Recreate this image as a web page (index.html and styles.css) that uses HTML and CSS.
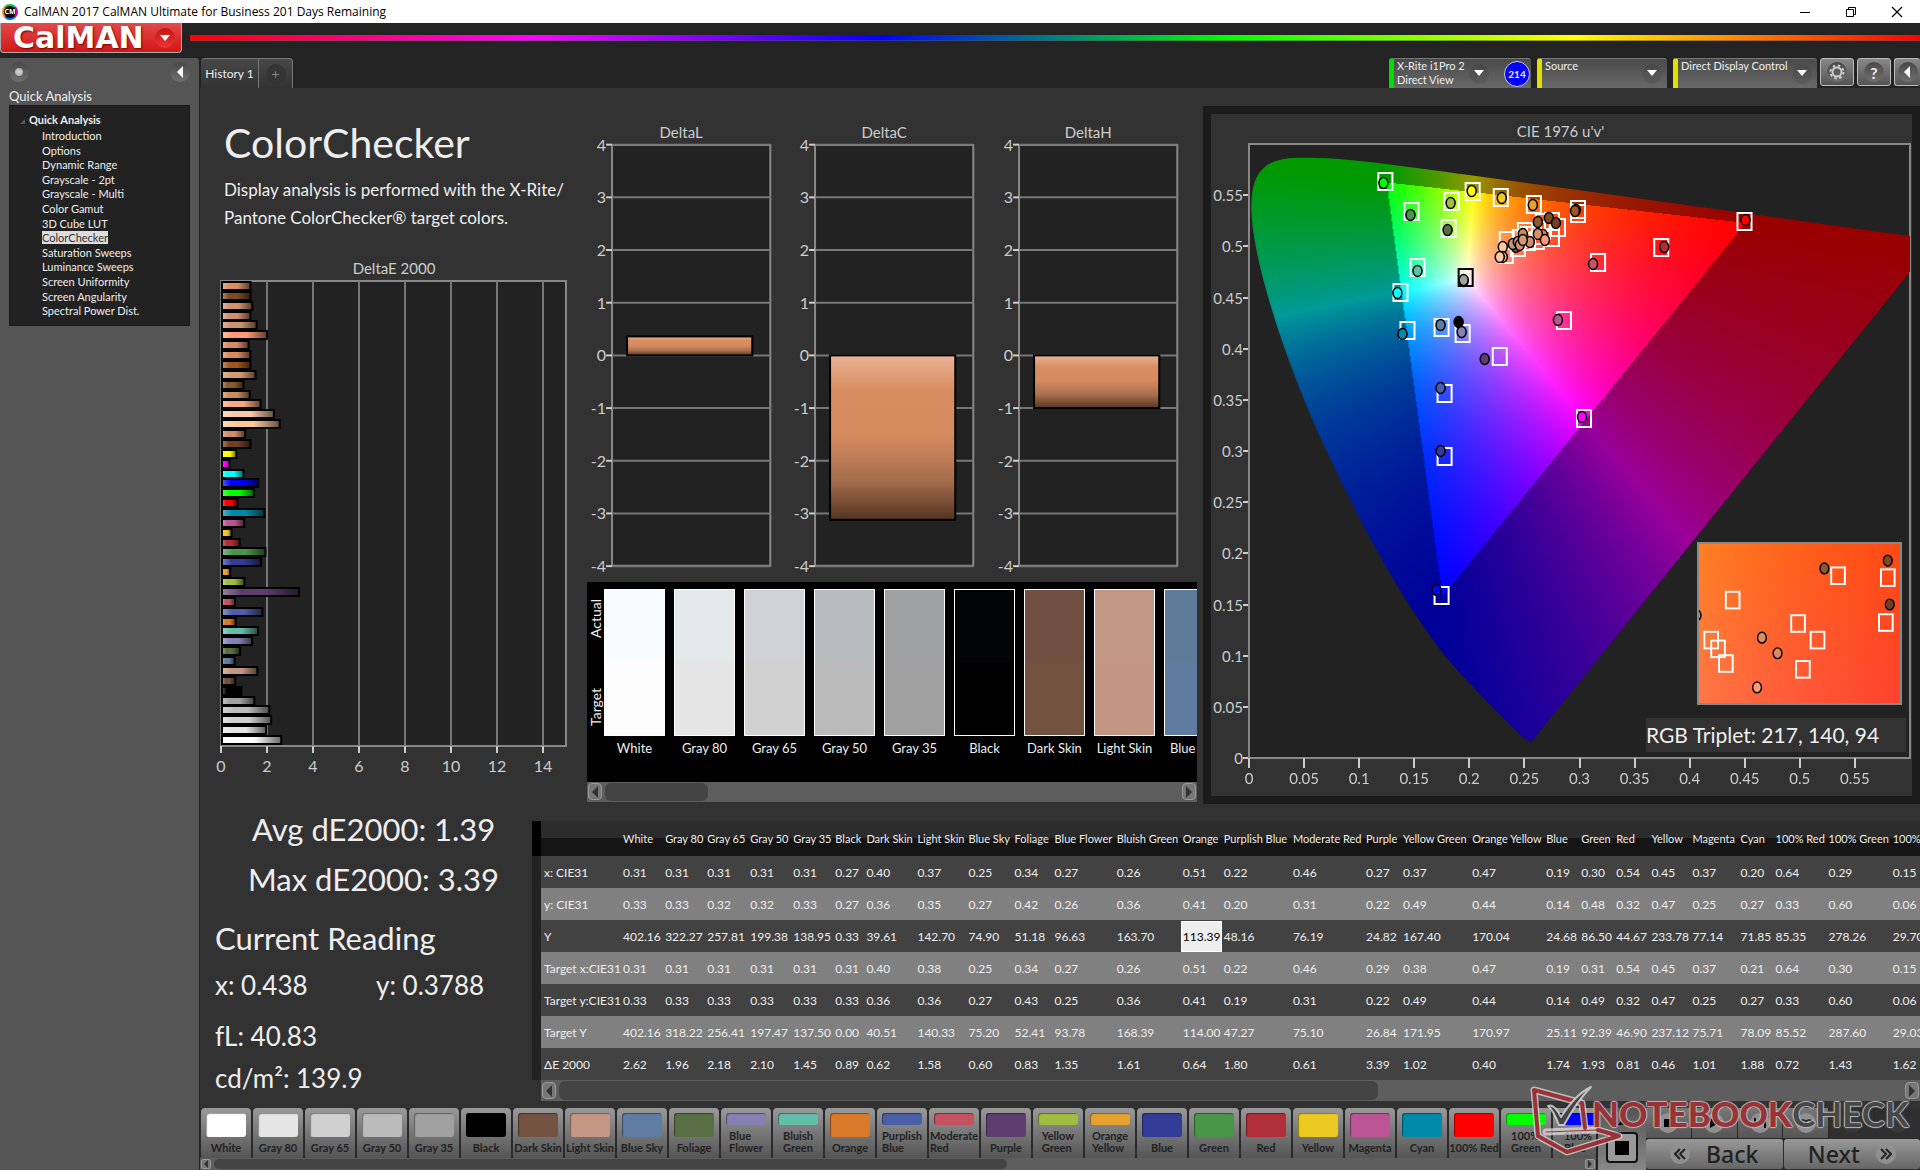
FILE: index.html
```html
<!DOCTYPE html>
<html lang="en">
<head>
    <meta charset="UTF-8">
    <meta name="viewport" content="width=device-width, initial-scale=1.0">
    <title>CalMAN 2017 CalMAN Ultimate for Business</title>
    <link rel="stylesheet" href="styles.css">
</head>
<body>
    <div class="titlebar">
        <span class="app-icon">CM</span>
        <span class="app-title">CalMAN 2017 CalMAN Ultimate for Business 201 Days Remaining</span>
        <button class="win-btn" aria-label="Minimize"><svg width="12" height="12"><path d="M1 6.5h10" stroke="#000"/></svg></button>
        <button class="win-btn" aria-label="Restore"><svg width="12" height="12" fill="none" stroke="#000"><path d="M1.500 3.500h7v7h-7zM3.500 3.500v-2h7v7h-2"/></svg></button>
        <button class="win-btn" aria-label="Close"><svg width="12" height="12"><path d="M1 1l10 10M11 1L1 11" stroke="#000" stroke-width="1.200"/></svg></button>
    </div>

    <header class="brand-row">
        <button class="brand"><span>CalMAN</span><i class="round red"><svg width="12" height="8"><path d="M1 1h10L6 7z" fill="#fff"/></svg></i></button>
        <div class="rainbow"></div>
    </header>

    <div class="app">
        <aside class="sidebar">
            <div class="side-top">
                <button class="round" aria-label="Pin"><i class="pin"></i></button>
                <button class="round" aria-label="Collapse"><svg width="7" height="12"><path d="M6 0v12L0 6z" fill="#fff"/></svg></button>
            </div>
            <h2>Quick Analysis</h2>
            <nav class="tree">
                <strong><svg width="5" height="5"><path d="M5 0v5H0z" fill="#555"/></svg>Quick Analysis</strong>
                <ul>
                    <li><a href="#">Introduction</a></li>
                    <li><a href="#">Options</a></li>
                    <li><a href="#">Dynamic Range</a></li>
                    <li><a href="#">Grayscale - 2pt</a></li>
                    <li><a href="#">Grayscale - Multi</a></li>
                    <li><a href="#">Color Gamut</a></li>
                    <li><a href="#">3D Cube LUT</a></li>
                    <li><a href="#" class="current">ColorChecker</a></li>
                    <li><a href="#">Saturation Sweeps</a></li>
                    <li><a href="#">Luminance Sweeps</a></li>
                    <li><a href="#">Screen Uniformity</a></li>
                    <li><a href="#">Screen Angularity</a></li>
                    <li><a href="#">Spectral Power Dist.</a></li>
                </ul>
            </nav>
        </aside>

        <div class="main">
            <div class="tabs">
                <button class="tab">History 1</button>
                <button class="tab add" aria-label="Add tab"><i class="round dim">+</i></button>
                <div class="devices">
                    <div class="device green meter">
                        <button class="device-name">X-Rite i1Pro 2<br>Direct View</button>
                        <i class="round"><svg width="10" height="7"><path d="M0 0h10L5 6z" fill="#fff"/></svg></i>
                        <span class="badge">214</span>
                    </div>
                    <div class="device source">
                        <button class="device-name">Source</button>
                        <i class="round"><svg width="10" height="7"><path d="M0 0h10L5 6z" fill="#fff"/></svg></i>
                    </div>
                    <div class="device display">
                        <button class="device-name">Direct Display Control</button>
                        <i class="round"><svg width="10" height="7"><path d="M0 0h10L5 6z" fill="#fff"/></svg></i>
                    </div>
                    <button class="tool" aria-label="Settings"><i class="round"><svg width="16" height="16" fill="none" stroke="#ccc"><circle cx="8" cy="8" r="4.500" stroke-width="2"/><circle cx="8" cy="8" r="6.500" stroke-width="2" stroke-dasharray="2.500 2.600"/></svg></i></button>
                    <button class="tool" aria-label="Help"><i class="round">?</i></button>
                    <button class="tool" aria-label="Back"><i class="round"><svg width="7" height="12"><path d="M6 0v12L0 6z" fill="#fff"/></svg></i></button>
                </div>
            </div>

            <div class="content">
                <div class="top">
                    <section class="intro">
                        <h1>ColorChecker</h1>
                        <p>Display analysis is performed with the X-Rite/<br>Pantone ColorChecker® target colors.</p>
                        <svg id="deltaE" class="chart" viewBox="0 0 385 525"></svg>
                    </section>

                    <section class="middle">
                        <div class="deltas" id="deltas"></div>
                        <div class="compare">
                            <div class="compare-body">
                                <div class="side-labels"><span>Target</span><span>Actual</span></div>
                                <div class="swatches" id="swatches"></div>
                            </div>
                            <div class="scroll"><button aria-label="Scroll left"><svg width="6" height="12"><path d="M6 0v12L0 6z"/></svg></button><div class="track"><div class="thumb compare-thumb"></div></div><button aria-label="Scroll right"><svg width="6" height="12"><path d="M0 0v12l6-6z"/></svg></button></div>
                        </div>
                    </section>

                    <section class="cie">
                        <h3>CIE 1976 u'v'</h3>
                        <div class="cie-plot">
                            <div class="v-axis" id="vAxis"></div>
                            <div class="plot">
                                <canvas id="locus" width="659" height="614"></canvas>
                                <svg id="markers" viewBox="0 0 659 614" preserveAspectRatio="none"></svg>
                                <div class="inset">
                                    <canvas id="insetCanvas" width="205" height="163"></canvas>
                                    <svg id="insetMarkers" viewBox="0 0 205 163"></svg>
                                </div>
                                <div class="triplet">RGB Triplet: 217, 140, 94</div>
                            </div>
                            <div class="u-axis" id="uAxis"></div>
                        </div>
                    </section>
                </div>

                <div class="bottom">
                    <section class="reading">
                        <p class="big avg">Avg dE2000: 1.39</p>
                        <p class="big max">Max dE2000: 3.39</p>
                        <p class="big current-title">Current Reading</p>
                        <p class="val xy"><span>x: 0.438</span><span>y: 0.3788</span></p>
                        <p class="val fl">fL: 40.83</p>
                        <p class="val">cd/m²: 139.9</p>
                    </section>
                    <section class="results">
                        <div class="table-wrap"><table id="results"></table></div>
                        <div class="scroll table-scroll"><button aria-label="Scroll left"><svg width="6" height="12"><path d="M6 0v12L0 6z"/></svg></button><div class="track"><div class="thumb table-thumb"></div></div><button aria-label="Scroll right"><svg width="6" height="12"><path d="M0 0v12l6-6z"/></svg></button></div>
                    </section>
                </div>

                <footer class="footer">
                    <div class="patch-zone">
                        <div class="patches" id="patches"></div>
                        <div class="scroll thin"><button aria-label="Scroll left"><svg width="4" height="8"><path d="M4 0v8L0 4z"/></svg></button><div class="track"><div class="thumb patch-thumb"></div></div><button aria-label="Scroll right"><svg width="4" height="8"><path d="M0 0v8l4-4z"/></svg></button></div>
                    </div>
                    <div class="stop-zone">
                        <button class="up" aria-label="Up"><svg width="8" height="5"><path d="M4 0l4 5H0z"/></svg></button>
                        <button class="stop" aria-label="Stop"><i></i></button>
                    </div>
                    <div class="nav-zone">
                        <div class="transport">
                            <button aria-label="Stop reading"><i><svg width="8" height="8"><path d="M0 0h8v8H0z"/></svg></i></button>
                            <button aria-label="Read"><i><svg width="9" height="10"><path d="M0 0l9 5-9 5z"/></svg></i></button>
                            <button aria-label="Read series"><i><svg width="12" height="10"><path d="M0 0h2v10H0zM10 0h2v10h-2zM4 2l4 3-4 3z"/></svg></i></button>
                            <button aria-label="Continuous"><i><svg width="14" height="8" fill="none" stroke="#222" stroke-width="1.500"><circle cx="4" cy="4" r="3"/><circle cx="10" cy="4" r="3"/></svg></i></button>
                            <button class="off" aria-label="Refresh"><i></i></button>
                            <button class="off" aria-label="More"><i></i></button>
                        </div>
                        <div class="steps">
                            <button><i><svg width="12" height="12"><path d="M6 1L1 6l5 5M11 1L6 6l5 5"/></svg></i>Back</button>
                            <button>Next<i><svg width="12" height="12"><path d="M1 1l5 5-5 5M6 1l5 5-5 5"/></svg></i></button>
                        </div>
                    </div>
                    <div class="watermark">
                        <svg width="110" height="80" viewBox="0 5 110 80" fill="none" stroke-linejoin="round" stroke-linecap="round">
                            <path d="M67 53L64 28 16 15l4 46 29 16 52-16-21-6-52 2" stroke="#ddd" stroke-opacity=".75" stroke-width="7"/>
                            <path d="M67 53L64 28 16 15l4 46 29 16 52-16-21-6" stroke="#9a3338" stroke-width="4"/>
                            <path d="M28 57l52-2" stroke="#9a3338" stroke-width="1"/>
                            <path d="M30 31c4-2 8 1 13 11C52 28 62 17 73 12 62 23 53 37 46 50h-5c-3-8-6-15-11-19z" fill="#444" stroke="#ddd" stroke-opacity=".8" stroke-width="2"/>
                        </svg>
                        <span><b>NOTEBOOK</b>CHECK</span>
                    </div>
                </footer>
            </div>
        </div>
    </div>

    <script>
        const barColors = [
            ["#da8e61", 1.28], ["#7b4a26", 1.28], ["#cf916e", 1.36], ["#cf9070", 1.28], ["#cb9270", 1.55],
            ["#ff9976", 2.0], ["#d58c6d", 1.2], ["#da895f", 1.28], ["#a0571f", 1.28], ["#d39a74", 1.5],
            ["#8b582f", 0.98], ["#c78d5c", 1.25], ["#f8a87c", 1.72], ["#fcc8a8", 2.3], ["#fec898", 2.55],
            ["#d18c6b", 1.05], ["#713f25", 1.28], ["#ffff00", 0.67], ["#ff00ff", 0.37], ["#00ffff", 0.98],
            ["#0000ff", 1.62], ["#00ff00", 1.43], ["#ff0000", 0.72], ["#0089a8", 1.88], ["#bb5595", 1.01],
            ["#ecc920", 0.46], ["#b02f38", 0.81], ["#489648", 1.93], ["#333c96", 1.74], ["#e6a12e", 0.4],
            ["#9fbd40", 1.02], ["#5e3e6e", 3.39], ["#c45261", 0.61], ["#4b5fa8", 1.8], ["#d97a2a", 0.64],
            ["#62bda9", 1.61], ["#8681b3", 1.35], ["#576f42", 0.83], ["#5f7da2", 0.6], ["#c59782", 1.58],
            ["#735242", 0.62], ["#000000", 0.89], ["#a0a0a0", 1.45], ["#bbbbbb", 2.1], ["#d0d0d0", 2.18],
            ["#e5e5e5", 1.96], ["#ffffff", 2.62]
        ];

        // name, column width, x, y, Y, target x, target y, target Y, dE
        const results = [
            ["White", 42, "0.31", "0.33", "402.16", "0.31", "0.33", "402.16", "2.62"],
            ["Gray 80", 42, "0.31", "0.33", "322.27", "0.31", "0.33", "318.22", "1.96"],
            ["Gray 65", 43, "0.31", "0.32", "257.81", "0.31", "0.33", "256.41", "2.18"],
            ["Gray 50", 43, "0.31", "0.32", "199.38", "0.31", "0.33", "197.47", "2.10"],
            ["Gray 35", 42, "0.31", "0.33", "138.95", "0.31", "0.33", "137.50", "1.45"],
            ["Black", 31, "0.27", "0.27", "0.33", "0.31", "0.33", "0.00", "0.89"],
            ["Dark Skin", 51, "0.40", "0.36", "39.61", "0.40", "0.36", "40.51", "0.62"],
            ["Light Skin", 51, "0.37", "0.35", "142.70", "0.38", "0.36", "140.33", "1.58"],
            ["Blue Sky", 46, "0.25", "0.27", "74.90", "0.25", "0.27", "75.20", "0.60"],
            ["Foliage", 40, "0.34", "0.42", "51.18", "0.34", "0.43", "52.41", "0.83"],
            ["Blue Flower", 62, "0.27", "0.26", "96.63", "0.27", "0.25", "93.78", "1.35"],
            ["Bluish Green", 66, "0.26", "0.36", "163.70", "0.26", "0.36", "168.39", "1.61"],
            ["Orange", 41, "0.51", "0.41", "113.39", "0.51", "0.41", "114.00", "0.64"],
            ["Purplish Blue", 69, "0.22", "0.20", "48.16", "0.22", "0.19", "47.27", "1.80"],
            ["Moderate Red", 73, "0.46", "0.31", "76.19", "0.46", "0.31", "75.10", "0.61"],
            ["Purple", 37, "0.27", "0.22", "24.82", "0.29", "0.22", "26.84", "3.39"],
            ["Yellow Green", 69, "0.37", "0.49", "167.40", "0.38", "0.49", "171.95", "1.02"],
            ["Orange Yellow", 74, "0.47", "0.44", "170.04", "0.47", "0.44", "170.97", "0.40"],
            ["Blue", 35, "0.19", "0.14", "24.68", "0.19", "0.14", "25.11", "1.74"],
            ["Green", 35, "0.30", "0.48", "86.50", "0.31", "0.49", "92.39", "1.93"],
            ["Red", 35, "0.54", "0.32", "44.67", "0.54", "0.32", "46.90", "0.81"],
            ["Yellow", 41, "0.45", "0.47", "233.78", "0.45", "0.47", "237.12", "0.46"],
            ["Magenta", 48, "0.37", "0.25", "77.14", "0.37", "0.25", "75.71", "1.01"],
            ["Cyan", 35, "0.20", "0.27", "71.85", "0.21", "0.27", "78.09", "1.88"],
            ["100% Red", 53, "0.64", "0.33", "85.35", "0.64", "0.33", "85.52", "0.72"],
            ["100% Green", 64, "0.29", "0.60", "278.26", "0.30", "0.60", "287.60", "1.43"],
            ["100% Blue", 60, "0.15", "0.06", "29.70", "0.15", "0.06", "29.03", "1.62"]
        ];
        const rowNames = ["x: CIE31", "y: CIE31", "Y", "Target x:CIE31", "Target y:CIE31", "Target Y", "ΔE 2000"];

        const patchColors = ["#fff", "#e5e5e5", "#d0d0d0", "#bbb", "#a0a0a0", "#000", "#735242", "#c59782", "#5f7da2",
            "#576f42", "#8681b3", "#62bda9", "#d97a2a", "#4b5fa8", "#c45261", "#5e3e6e", "#9fbd40", "#e6a12e",
            "#333c96", "#489648", "#b02f38", "#ecc920", "#bb5595", "#0089a8", "#f00", "#0f0", "#00f"];

        const pairs = [
            ["White", "#f7fdff", "#fcfcfc"], ["Gray 80", "#e3e8eb", "#e5e5e5"], ["Gray 65", "#cfd3d8", "#d1d1d1"],
            ["Gray 50", "#b7bcbe", "#bababa"], ["Gray 35", "#9fa0a1", "#a0a0a0"], ["Black", "#020305", "#000"],
            ["Dark Skin", "#715041", "#735242"], ["Light Skin", "#c29885", "#c49681"], ["Blue Sky", "#5e7b9a", "#5f7ba0"]
        ];

        function byId(id) { return document.getElementById(id); }

        // DeltaE 2000 bars
        function drawDeltaE() {
            let s = '<defs><linearGradient id="shade"><stop offset="0" stop-color="#fff" stop-opacity=".35"/><stop offset=".25" stop-color="#fff" stop-opacity="0"/><stop offset=".55" stop-opacity="0"/><stop offset="1" stop-opacity=".6"/></linearGradient></defs>';
            s += '<text class="title" x="194" y="19">DeltaE 2000</text>';
            s += '<rect class="frame" x="21" y="26" width="345" height="465"/>';
            for (let i = 0; i <= 14; i += 2) {
                const x = 21 + i * 23;
                s += `<path class="grid" d="M${x} 26v465"/><path class="tick" d="M${x} 491v7"/><text class="tick-label" x="${x}" y="517">${i}</text>`;
            }
            barColors.forEach(([color, value], i) => {
                const y = Math.round(27 + i * 9.87);
                const w = value * 23 - 1;
                s += `<rect x="22" y="${y}" width="${w}" height="8" fill="${color}"/><rect x="22" y="${y}" width="${w}" height="8" fill="url(#shade)" stroke="#000" stroke-width="2"/>`;
            });
            byId("deltaE").innerHTML = s;
        }

        // DeltaL, DeltaC and DeltaH share one scale, -4 to 4
        function drawDelta(name, value) {
            const zero = 245, unit = 52.6;
            let s = '<defs><linearGradient id="skin" x2="0" y2="1"><stop offset="0" stop-color="#e9b496"/><stop offset=".22" stop-color="#d98d5f"/><stop offset=".48" stop-color="#d58b60"/><stop offset=".75" stop-color="#a86f4e"/><stop offset="1" stop-color="#553522"/></linearGradient></defs>';
            s += `<text class="title" x="94" y="28">${name}</text><rect class="frame" x="25" y="35" width="158" height="420"/>`;
            for (let i = -4; i <= 4; i++) {
                const y = zero - i * unit;
                s += `<path class="grid" d="M25 ${y}h158"/><path class="tick" d="M19 ${y}h6"/><text class="tick-label end" x="19" y="${y + 6}">${i}</text>`;
            }
            const top = value > 0 ? zero - value * unit : zero;
            s += `<rect x="40" y="${top}" width="125" height="${Math.abs(value) * unit}" fill="url(#skin)" stroke="#000" stroke-width="2"/>`;
            return `<svg class="chart" viewBox="0 0 203 465">${s}</svg>`;
        }

        function drawTable() {
            let s = '<thead><tr><th class="gutter"></th><th class="row-name"></th>';
            results.forEach(r => s += `<th scope="col" style="width:${r[1]}px">${r[0]}</th>`);
            s += "</tr></thead><tbody>";
            rowNames.forEach((name, i) => {
                s += `<tr><td class="gutter"></td><th scope="row">${name}</th>`;
                results.forEach(r => {
                    const picked = r[0] === "Orange" && i === 2;
                    s += `<td>${picked ? `<span class="picked">${r[i + 2]}</span>` : r[i + 2]}</td>`;
                });
                s += "</tr>";
            });
            byId("results").innerHTML = s + "</tbody>";
        }

        function drawPatches() {
            const tall = ["Blue Flower", "Bluish Green", "Purplish Blue", "Moderate Red", "Yellow Green", "Orange Yellow", "100% Green", "100% Blue"];
            byId("patches").innerHTML = results.map((r, i) => {
                const two = tall.includes(r[0]);
                const label = two ? r[0].replace(" ", "<br>") : r[0];
                return `<button class="patch${two ? " two" : ""}"><i style="background:${patchColors[i]}"></i><span>${label}</span></button>`;
            }).join("");
            byId("swatches").innerHTML = pairs.map(p =>
                `<div class="pair"><div class="pair-box"><i style="background:${p[1]}"></i><i style="background:${p[2]}"></i></div><span>${p[0]}</span></div>`
            ).join("");
        }

        function drawAxes() {
            let v = "", u = "";
            for (let i = 11; i >= 0; i--) v += `<span style="bottom:${i / 12 * 100}%">${i * 5 / 100}</span>`;
            for (let i = 0; i <= 11; i++) u += `<span style="left:${i / 12 * 100}%">${i * 5 / 100}</span>`;
            byId("vAxis").innerHTML = v;
            byId("uAxis").innerHTML = u;
        }

        // Spectral locus, CIE 1931 xy
        const locus = [
            [.1741, .0050], [.1733, .0048], [.1714, .0051], [.1689, .0069], [.1644, .0109], [.1566, .0177], [.1440, .0297],
            [.1355, .0399], [.1241, .0578], [.1096, .0868], [.0913, .1327], [.0687, .2007], [.0454, .2950], [.0235, .4127],
            [.0082, .5384], [.0039, .6548], [.0139, .7502], [.0389, .8120], [.0743, .8338], [.1142, .8262], [.1547, .8059],
            [.1929, .7816], [.2296, .7543], [.3016, .6923], [.3731, .6245], [.4441, .5547], [.5125, .4866], [.5752, .4242],
            [.6270, .3725], [.6658, .3340], [.6915, .3083], [.7190, .2809], [.7347, .2653]
        ];

        function colorAt(u, v) {
            const d = 6 * u - 16 * v + 12;
            const x = 9 * u / d, y = 4 * v / d;
            const X = x / y, Z = (1 - x - y) / y;
            const rgb = [
                3.2406 * X - 1.5372 - 0.4986 * Z,
                -0.9689 * X + 1.8758 + 0.0415 * Z,
                0.0557 * X - 0.2040 + 1.0570 * Z
            ];
            const dim = Math.min(...rgb) < 0 ? 153 : 255;
            const max = Math.max(...rgb);
            return rgb.map(c => Math.max(0, c) / max * dim);
        }

        function fillField(canvas, u0, u1, v0, v1) {
            const ctx = canvas.getContext("2d");
            const w = canvas.width, h = canvas.height;
            const img = ctx.createImageData(w, h);
            for (let y = 0; y < h; y++) {
                for (let x = 0; x < w; x++) {
                    const c = colorAt(u0 + (u1 - u0) * (x + 0.5) / w, v0 + (v1 - v0) * (y + 0.5) / h);
                    const k = (y * w + x) * 4;
                    img.data[k] = c[0];
                    img.data[k + 1] = c[1];
                    img.data[k + 2] = c[2];
                    img.data[k + 3] = 255;
                }
            }
            ctx.putImageData(img, 0, 0);
        }

        function drawLocus() {
            const canvas = byId("locus");
            fillField(canvas, 0, 0.6, 0.6, 0);
            const ctx = canvas.getContext("2d");
            // keep only what is inside the horseshoe
            const pts = locus.map(([x, y]) => {
                const d = -2 * x + 12 * y + 3;
                return [4 * x / d / 0.6 * 659, 614 - 9 * y / d / 0.6 * 614];
            });
            ctx.globalCompositeOperation = "destination-in";
            ctx.beginPath();
            ctx.moveTo(pts[0][0], pts[0][1]);
            for (let i = 1; i < pts.length - 1; i++) {
                const mx = (pts[i][0] + pts[i + 1][0]) / 2;
                const my = (pts[i][1] + pts[i + 1][1]) / 2;
                ctx.quadraticCurveTo(pts[i][0], pts[i][1], mx, my);
            }
            ctx.lineTo(pts[pts.length - 1][0], pts[pts.length - 1][1]);
            ctx.closePath();
            ctx.fill();
        }

        const targets = [[136, 37], [162, 67], [202, 57], [199, 84], [223, 47], [251, 53], [284, 60], [328, 65], [328, 69],
            [494, 77], [411, 103], [348, 118], [168, 123], [151, 148], [158, 186], [192, 183], [213, 189], [250, 212],
            [195, 249], [195, 312], [192, 451], [314, 176], [334, 274], [257, 96], [256, 110], [268, 103], [275, 87],
            [270, 94], [278, 97], [287, 96], [293, 86], [293, 78], [302, 77], [308, 83], [302, 93], [278, 91], [284, 91]];
        const measured = [[134, 39, "#0f0"], [161, 71, "#489648"], [201, 59, "#9fbd40"], [198, 86, "#576f42"],
            [222, 47, "#ff0"], [252, 54, "#ecc920"], [283, 61, "#e6a12e"], [326, 66, "#d97a2a"], [325, 67, "#a0571f"],
            [495, 76, "#f00"], [414, 103, "#b02f38"], [343, 120, "#c45261"], [168, 127, "#62bda9"], [148, 149, "#0ff"],
            [153, 190, "#0089a8"], [191, 181, "#5f7da2"], [209, 178, "#000"], [212, 188, "#8681b3"], [235, 215, "#5e3e6e"],
            [191, 244, "#4b5fa8"], [191, 307, "#333c96"], [187, 446, "#00f"], [308, 176, "#bb5595"], [332, 273, "#f0f"],
            [214, 137, "#bbb"], [214, 136, "#a0a0a0"], [299, 74, "#7b4a26"], [288, 78, "#8b582f"], [306, 79, "#713f25"],
            [293, 91, "#da895f"], [288, 90, "#da8e61"], [295, 96, "#ff9976"], [266, 103, "#735242"], [263, 100, "#c59782"],
            [268, 98, "#cf916e"], [270, 101, "#cf9070"], [273, 90, "#c78d5c"], [280, 98, "#d18c6b"], [273, 96, "#d39a74"],
            [253, 103, "#fec898"], [253, 113, "#f8a87c"], [250, 113, "#fcc8a8"]];
        const insetTargets = [[142, 32], [193, 34], [34, 57], [101, 81], [12, 98], [19, 107], [27, 122], [121, 98], [191, 80], [106, 128]];
        const insetMeasured = [[128, 25, "#8b582f"], [193, 17, "#7b4a26"], [195, 62, "#713f25"], [64, 96, "#da8e61"],
            [80, 112, "#da895f"], [59, 147, "#ff9976"], [-3, 73, "#c78d5c"]];

        function box(x, y, color) {
            return `<rect class="target" x="${x - 7}" y="${y - 8}" width="14" height="17" stroke="${color}"/>`;
        }
        function dot(x, y, color) {
            return `<ellipse class="dot" cx="${x}" cy="${y}" rx="4.500" ry="5.500" fill="${color}"/>`;
        }

        drawDeltaE();
        byId("deltas").innerHTML = drawDelta("DeltaL", 0.36) + drawDelta("DeltaC", -3.12) + drawDelta("DeltaH", -1);
        drawTable();
        drawPatches();
        drawAxes();
        drawLocus();
        fillField(byId("insetCanvas"), 0.248, 0.291, 0.525, 0.502);
        byId("markers").innerHTML = targets.map(t => box(t[0], t[1], "#fff")).join("") + box(216, 133, "#000") +
            measured.map(m => dot(...m)).join("");
        byId("insetMarkers").innerHTML = insetTargets.map(t => box(t[0], t[1], "#fff")).join("") +
            insetMeasured.map(m => dot(...m)).join("");
    </script>
</body>
</html>
```
FILE: styles.css
```css
* {
    box-sizing: border-box;
}
body {
    margin: 0;
    height: 100vh;
    display: flex;
    flex-direction: column;
    background: #232323;
    color: #eee;
    font-family: Lato, sans-serif;
    font-size: 12px;
    overflow: hidden;
}
h1, h2, h3, p, ul {
    margin: 0;
    padding: 0;
    font-weight: normal;
}
button {
    font: inherit;
    color: inherit;
    border: none;
    background: none;
    padding: 0;
}
i {
    font-style: normal;
}
a {
    color: inherit;
    text-decoration: none;
}

/* Window title */
.titlebar {
    display: flex;
    align-items: center;
    height: 23px;
    background: #fff;
    color: #000;
    font-family: "Open Sans", sans-serif;
}
.app-icon {
    width: 16px;
    height: 16px;
    margin: 0 6px 0 2px;
    border-radius: 50%;
    border: 2px solid #0a8;
    border-color: #0c4 #c0c #06f #e80;
    background: #000;
    color: #fff;
    font-size: 7px;
    font-weight: bold;
    line-height: 12px;
    text-align: center;
}
.app-title {
    flex: 1;
}
.win-btn {
    width: 46px;
    height: 22px;
}
.win-btn svg {
    display: block;
    margin: auto;
}

/* Brand */
.brand-row {
    display: flex;
    height: 35px;
    align-items: flex-start;
    gap: 8px;
}
.brand {
    display: flex;
    align-items: center;
    justify-content: space-between;
    width: 182px;
    height: 30px;
    padding: 0 6px 0 12px;
    border: 1px solid #aaa;
    border-top: none;
    border-radius: 0 0 4px 4px;
    background: linear-gradient(#e34a4a, #d01818);
    color: #fff;
    font-family: "DejaVu Sans", sans-serif;
    font-size: 30px;
    font-weight: bold;
    line-height: 28px;
    text-shadow: 1px 1px 2px #700;
}
.rainbow {
    flex: 1;
    height: 6px;
    margin-top: 12px;
    background: linear-gradient(to right, #f00, #f0f, #00f, #0f0, #ff0, #f00);
    border-bottom: 1px solid #5558;
}
.round {
    display: flex;
    align-items: center;
    justify-content: center;
    flex: none;
    width: 20px;
    height: 20px;
    border-radius: 50%;
    background: linear-gradient(#484848, #707070);
}
.round.red {
    background: linear-gradient(#c41616, #e33);
}
.round.dim {
    background: #353535;
    color: #888;
    font-size: 14px;
}

.app {
    flex: 1;
    display: flex;
    min-height: 0;
}

/* Sidebar */
.sidebar {
    width: 200px;
    padding: 4px 9px;
    background: #555;
    border-radius: 0 4px 0 0;
    border-right: 1px solid #222;
}
.side-top {
    display: flex;
    justify-content: space-between;
}
.pin {
    width: 8px;
    height: 8px;
    border-radius: 50%;
    background: radial-gradient(#ddd, #999);
}
.sidebar h2 {
    margin-top: 5px;
    font-size: 13px;
    line-height: 18px;
}
.tree {
    height: 221px;
    padding: 7px 0 0 10px;
    background: #222;
    border: 1px solid #1a1a1a;
    font-size: 11px;
    line-height: 14px;
}
.tree strong svg {
    margin-right: 4px;
}
.tree ul {
    display: flex;
    flex-direction: column;
    height: 190px;
    margin-top: 2px;
    padding-left: 22px;
    list-style: none;
}
.tree li {
    flex: 1;
}
.tree .current {
    background: #ddd;
    color: #333;
}

.main {
    flex: 1;
    display: flex;
    flex-direction: column;
    min-width: 0;
}
.tabs {
    display: flex;
    height: 30px;
    padding-left: 1px;
}
.tab {
    width: 58px;
    background: linear-gradient(#484848, #333);
    border: 1px solid #777;
    border-bottom: none;
    border-left: none;
    border-radius: 4px 0 0 0;
}
.tab.add {
    display: flex;
    align-items: center;
    justify-content: center;
    width: 34px;
    border-radius: 0 4px 0 0;
}
.devices {
    display: flex;
    margin-left: auto;
    gap: 3px;
}
.device {
    display: flex;
    align-items: center;
    margin-right: 3px;
    padding-right: 5px;
    background: linear-gradient(#4a4a4a, #686868);
    border-left: 5px solid #e0e000;
    border-top: 1px solid #777;
    border-radius: 3px 3px 0 0;
    font-size: 11px;
}
.device.green {
    border-left-color: #0d0;
}
.device-name {
    flex: 1;
    align-self: stretch;
    display: flex;
    padding: 0 3px;
    text-align: left;
    line-height: 14px;
    white-space: nowrap;
}
.meter {
    width: 142px;
    padding-right: 1px;
}
.source {
    width: 130px;
}
.display {
    width: 144px;
    margin-right: 0;
}
.device .round {
    background: linear-gradient(#484848, #5c5c5c);
}
.badge {
    width: 26px;
    height: 26px;
    margin-left: 15px;
    border: 1px solid #ccc;
    border-radius: 50%;
    background: #00f;
    font-size: 10px;
    font-weight: bold;
    line-height: 24px;
    text-align: center;
}
.tool {
    display: flex;
    align-items: center;
    justify-content: center;
    width: 34px;
    height: 28px;
    border: 1px solid #bbb;
    border-radius: 3px;
    background: linear-gradient(#888, #555);
    font-size: 16px;
    font-weight: bold;
}
.tool:last-child {
    width: 26px;
    border-right: none;
}

/* Content */
.content {
    flex: 1;
    display: flex;
    flex-direction: column;
    min-height: 0;
    background: #323232;
}
.top {
    display: grid;
    grid-template-columns: 385fr 618fr 717fr;
    height: 716px;
}
.top section {
    min-width: 0;
}
.intro h1 {
    padding: 25px 0 0 24px;
    font-size: 41px;
    line-height: 60px;
}
.intro p {
    padding: 3px 0 0 24px;
    font-size: 17px;
    line-height: 28px;
    white-space: nowrap;
}
.intro .chart {
    margin-top: 23px;
}
.chart {
    display: block;
    width: 100%;
}
.chart text {
    fill: #ccc;
    font-size: 16px;
    text-anchor: middle;
}
.chart text.title {
    font-size: 15px;
}
.chart text.end {
    text-anchor: end;
}
.frame {
    fill: #222;
    stroke: #888;
    stroke-width: 2;
}
.grid {
    stroke: #777;
    stroke-width: 2;
}
.tick {
    stroke: #ccc;
    stroke-width: 2;
}
.middle {
    padding: 22px 6px 0 2px;
}
.deltas {
    display: grid;
    grid-template-columns: repeat(3, 1fr);
}
.compare {
    margin-top: 6px;
    background: #000;
}
.compare-body {
    display: flex;
    height: 200px;
    padding-top: 7px;
}
.side-labels {
    display: flex;
    justify-content: space-between;
    width: 17px;
    height: 147px;
    padding: 10px 0;
    writing-mode: vertical-rl;
    transform: rotate(180deg);
    font-size: 14px;
    line-height: 17px;
}
.swatches {
    flex: 1;
    display: flex;
    gap: 9px;
    overflow: hidden;
}
.pair {
    flex: none;
    width: 61px;
    text-align: center;
    font-size: 13px;
    line-height: 24px;
    white-space: nowrap;
}
.pair-box {
    display: flex;
    flex-direction: column;
    height: 147px;
    border: 1px solid #fff;
}
.pair-box i {
    flex: 1;
}

/* Scroll bars */
.scroll {
    display: flex;
    align-items: center;
    height: 20px;
    padding: 1px;
    background: #5e5e5e;
}
.scroll button {
    display: flex;
    align-items: center;
    justify-content: center;
    width: 14px;
    height: 17px;
    border: 1px solid #999;
    border-radius: 4px;
    background: #777;
}
.scroll path {
    fill: #333;
}
.track {
    flex: 1;
    height: 100%;
    padding: 0 3px;
}
.thumb {
    height: 100%;
    border-radius: 6px;
    background: #444;
}
.compare-thumb {
    width: 18%;
}

/* CIE chart */
.cie {
    margin-top: 18px;
    border: 8px solid #1b1b1b;
    padding: 5px 2px 0 0;
}
.cie h3 {
    color: #ccc;
    font-size: 15px;
    line-height: 25px;
    text-align: center;
}
.cie-plot {
    display: grid;
    grid-template-columns: 38px 1fr;
    grid-template-rows: 614px 30px;
}
.v-axis, .u-axis {
    position: relative;
    color: #ccc;
    font-size: 15px;
    line-height: 20px;
}
.v-axis span {
    position: absolute;
    right: 0;
    height: 20px;
    margin-bottom: -10px;
    display: flex;
    align-items: center;
}
.v-axis span::after {
    content: "";
    width: 6px;
    height: 2px;
    background: #ccc;
}
.u-axis {
    grid-column: 2;
}
.u-axis span {
    position: absolute;
    width: 40px;
    margin-left: -20px;
    text-align: center;
}
.u-axis span::before {
    content: "";
    display: block;
    width: 2px;
    height: 10px;
    margin: 0 auto;
    background: #ccc;
}
.plot {
    position: relative;
    background: #222;
    outline: 2px solid #888;
    outline-offset: -1px;
}
.plot canvas, .plot svg {
    position: absolute;
    inset: 0;
    width: 100%;
    height: 100%;
}
.target {
    fill: none;
    stroke-width: 2;
}
.dot {
    stroke: #000;
    stroke-width: 1.5;
}
.inset {
    position: absolute;
    right: 8px;
    bottom: 53px;
    width: 205px;
    height: 163px;
    border: 2px solid #888;
    overflow: hidden;
}
.triplet {
    position: absolute;
    right: 4px;
    bottom: 6px;
    width: 260px;
    background: #323232;
    font-size: 21px;
    line-height: 34px;
    white-space: nowrap;
}

/* Readings */
.bottom {
    display: flex;
    height: 304px;
}
.reading {
    width: 332px;
    flex: none;
    padding-left: 15px;
}
.big {
    font-size: 31px;
    line-height: 50px;
}
.avg {
    padding-left: 37px;
}
.max {
    padding-left: 33px;
}
.current-title {
    padding-top: 9px;
}
.val {
    font-size: 26px;
    line-height: 42px;
}
.xy {
    display: grid;
    grid-template-columns: 161px 1fr;
    padding: 1px 0 9px;
}
.results {
    flex: 1;
    min-width: 0;
    padding-top: 17px;
}
.table-wrap {
    overflow: hidden;
}
table {
    width: 1421px;
    table-layout: fixed;
    border-collapse: collapse;
    white-space: nowrap;
}
th, td {
    height: 32px;
    padding: 0;
    font-weight: normal;
    text-align: left;
}
thead th {
    height: 35px;
    background: linear-gradient(#2c2c2c 50%, #151515 50%);
    font-size: 11px;
}
thead .gutter {
    width: 9px;
    background: #000;
}
tbody .gutter {
    background: #222;
}
.row-name {
    width: 82px;
}
tbody th {
    padding-left: 3px;
}
tbody tr {
    background: #424242;
}
tbody tr:nth-child(even) {
    background: #808080;
}
.picked {
    display: block;
    width: max-content;
    margin-left: -2px;
    padding: 0 1px;
    background: #eee;
    border: 1px solid #fff;
    color: #000;
    line-height: 29px;
}
.table-scroll {
    height: 21px;
    margin-left: 9px;
}
.table-thumb {
    width: 61%;
}

/* Patch strip */
.footer {
    position: relative;
    display: flex;
    flex: 1;
    background: #2a2a2a;
}
.patch-zone {
    flex: 1;
    min-width: 0;
}
.patches {
    display: flex;
    gap: 2px;
    height: 50px;
    padding-left: 1px;
    overflow: hidden;
}
.patch {
    display: flex;
    flex-direction: column;
    align-items: center;
    flex: none;
    width: 50px;
    padding-top: 5px;
    border-radius: 4px 4px 0 0;
    background: linear-gradient(#999, #555);
    color: #222;
    font-size: 11px;
    line-height: 12px;
    font-weight: bold;
    text-align: left;
    white-space: nowrap;
}
.patch i {
    width: 40px;
    height: 24px;
    margin-bottom: 5px;
    border-radius: 3px;
    box-shadow: inset 1px 1px 1px #0006;
}
.patch.two i {
    height: 12px;
}
.thin {
    height: 12px;
}
.thin button {
    width: 10px;
    height: 10px;
    border-radius: 2px;
}
.patch-thumb {
    width: 58%;
}
.stop-zone {
    width: 50px;
    display: flex;
    flex-direction: column;
    align-items: center;
    background: linear-gradient(#555, #888);
    border-left: 2px solid #222;
}
.up {
    height: 24px;
}
.stop {
    display: flex;
    align-items: center;
    justify-content: center;
    width: 32px;
    height: 31px;
    border: 2px solid #111;
    border-radius: 4px;
    background: #999;
}
.stop i {
    width: 14px;
    height: 14px;
    background: #000;
}
.nav-zone {
    width: 274px;
    display: flex;
    flex-direction: column;
    gap: 1px;
}
.transport, .steps {
    display: flex;
    gap: 1px;
    height: 30px;
}
.transport button, .steps button {
    flex: 1;
    display: flex;
    align-items: center;
    justify-content: center;
    background: linear-gradient(#777, #555);
    color: #222;
}
.transport .off {
    background: #2f2f2f;
}
.transport .off i {
    background: #383838;
}
.steps button {
    gap: 16px;
    background: linear-gradient(#999, #666);
    border-radius: 3px;
    font-family: "Noto Sans", sans-serif;
    font-size: 23px;
    font-weight: 500;
}
.steps svg {
    fill: none;
    stroke: #222;
    stroke-width: 2;
}
.nav-zone i {
    display: flex;
    align-items: center;
    justify-content: center;
    width: 20px;
    height: 20px;
    border-radius: 50%;
    background: #909090;
}
.watermark {
    position: absolute;
    right: 11px;
    bottom: 10px;
    display: flex;
    align-items: flex-start;
    height: 80px;
    font-size: 35px;
    font-weight: bold;
    line-height: 66px;
    color: #333d;
    text-shadow: 1px 0 1px #bbb, -1px 0 1px #bbb, 0 1px 1px #bbb, 0 -1px 1px #bbb;
    pointer-events: none;
}
.watermark svg {
    margin-right: -36px;
}
.watermark b {
    color: #9a3338;
    font-weight: 900;
}
```
